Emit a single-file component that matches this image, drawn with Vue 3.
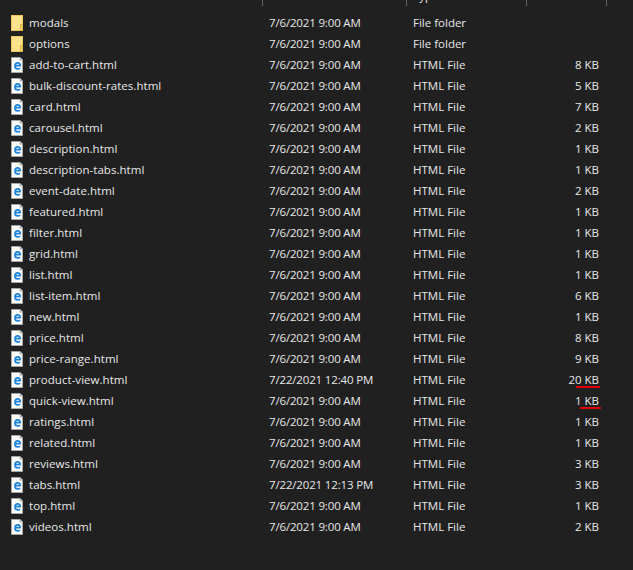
<template>
  <div class="explorer">
    <div class="header">
      <div class="col-sep"></div>
      <div class="col-sep"></div>
      <div class="col-sep"><span class="type-label">Type</span></div>
      <div class="col-sep"></div>
    </div>
    <div class="list">
      <div v-for="f in files" :key="f.name" class="row">
        <svg v-if="f.folder" class="icon" width="16" height="16" viewBox="0 0 16 16">
          <rect x="1.5" y="0.5" width="11" height="15" fill="#ffe38c" stroke="#eec65c" />
          <rect x="10.5" y="9.5" width="2" height="6" fill="#f6d36f" stroke="#e2b84c" />
        </svg>
        <svg v-else class="icon" width="16" height="16" viewBox="0 0 16 16">
          <path d="M1.5 0.5H10L12.5 3V15.5H1.5Z" fill="#fff" stroke="#a8a8a8" />
          <path d="M10 0.5V3H12.5" fill="#e4e4e4" stroke="#a8a8a8" />
          <path d="M5 8.7H10.2C10.2 6.9 9.2 5.9 7.7 5.9C6.1 5.9 5 7.1 5 8.9C5 10.8 6.1 11.9 7.8 11.9C8.8 11.9 9.6 11.6 10.1 11.1" fill="none" stroke="#1f83e0" stroke-width="1.7" />
        </svg>
        <span class="name">{{ f.name }}</span>
        <span class="date">{{ f.date }}</span>
        <span class="type">{{ f.folder ? 'File folder' : 'HTML File' }}</span>
        <span class="size">{{ f.size }}</span>
        <i v-if="f.mark" class="mark" :style="{ left: f.mark[0] + 'px', width: f.mark[1] + 'px' }"></i>
      </div>
    </div>
  </div>
</template>

<script setup>
const d = '7/6/2021 9:00 AM'
const files = [
  { name: 'modals', date: d, folder: true },
  { name: 'options', date: d, folder: true },
  { name: 'add-to-cart.html', date: d, size: '8 KB' },
  { name: 'bulk-discount-rates.html', date: d, size: '5 KB' },
  { name: 'card.html', date: d, size: '7 KB' },
  { name: 'carousel.html', date: d, size: '2 KB' },
  { name: 'description.html', date: d, size: '1 KB' },
  { name: 'description-tabs.html', date: d, size: '1 KB' },
  { name: 'event-date.html', date: d, size: '2 KB' },
  { name: 'featured.html', date: d, size: '1 KB' },
  { name: 'filter.html', date: d, size: '1 KB' },
  { name: 'grid.html', date: d, size: '1 KB' },
  { name: 'list.html', date: d, size: '1 KB' },
  { name: 'list-item.html', date: d, size: '6 KB' },
  { name: 'new.html', date: d, size: '1 KB' },
  { name: 'price.html', date: d, size: '8 KB' },
  { name: 'price-range.html', date: d, size: '9 KB' },
  { name: 'product-view.html', date: '7/22/2021 12:40 PM', size: '20 KB', mark: [576, 24] },
  { name: 'quick-view.html', date: d, size: '1 KB', mark: [580, 21] },
  { name: 'ratings.html', date: d, size: '1 KB' },
  { name: 'related.html', date: d, size: '1 KB' },
  { name: 'reviews.html', date: d, size: '3 KB' },
  { name: 'tabs.html', date: '7/22/2021 12:13 PM', size: '3 KB' },
  { name: 'top.html', date: d, size: '1 KB' },
  { name: 'videos.html', date: d, size: '2 KB' },
]
</script>

<style>
html, body { background: #202020; }
</style>

<style scoped>
.explorer {
  width: 633px;
  height: 570px;
  overflow: hidden;
  background: #202020;
  color: #e8e8e8;
  font-family: "Open Sans", "Noto Sans", sans-serif;
  font-size: 11.5px;
}
.header {
  display: grid;
  grid-template-columns: 263px 144px 120px 80px;
  height: 6px;
  margin-bottom: 6px;
  overflow: hidden;
}
.col-sep { border-right: 1px solid #636363; overflow: hidden; }
.type-label {
  display: block;
  margin: -11px 0 0 6px;
  line-height: 14px;
  width: 40px;
}
.list { display: flex; flex-direction: column; }
.row {
  position: relative;
  display: grid;
  grid-template-columns: 29px 240px 144px 110px 76px;
  height: 21px;
  align-items: center;
  white-space: nowrap;
}
.icon { margin-left: 10px; }
.name { letter-spacing: 0.04px; }
.date { letter-spacing: -0.16px; }
.size { text-align: right; }
.mark {
  position: absolute;
  top: 17px;
  height: 2px;
  background: #e00000;
}
</style>
